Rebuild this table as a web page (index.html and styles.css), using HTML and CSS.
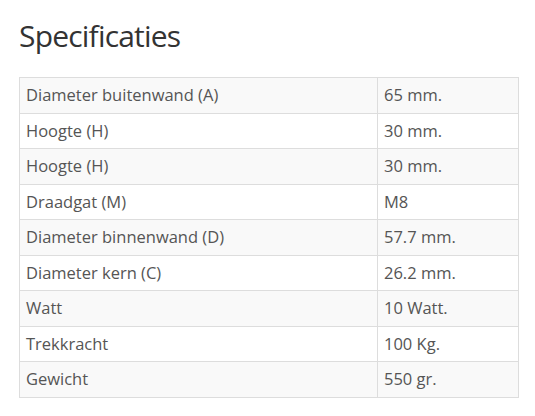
FILE: index.html
```html
<!DOCTYPE html>
<html>
<head>
<meta charset="utf-8">
<link rel="stylesheet" href="styles.css">
</head>
<body>
<div class="page">
  <h2 class="title">Specificaties</h2>
  <table class="specs">
    <tbody>
      <tr><td class="label">Diameter buitenwand (A)</td><td>65 mm.</td></tr>
      <tr><td class="label">Hoogte (H)</td><td>30 mm.</td></tr>
      <tr><td class="label">Hoogte (H)</td><td>30 mm.</td></tr>
      <tr><td class="label">Draadgat (M)</td><td>M8</td></tr>
      <tr><td class="label">Diameter binnenwand (D)</td><td>57.7 mm.</td></tr>
      <tr><td class="label">Diameter kern (C)</td><td>26.2 mm.</td></tr>
      <tr><td class="label">Watt</td><td>10 Watt.</td></tr>
      <tr><td class="label">Trekkracht</td><td>100 Kg.</td></tr>
      <tr><td class="label">Gewicht</td><td>550 gr.</td></tr>
    </tbody>
  </table>
</div>
</body>
</html>
```
FILE: styles.css
```css
html, body {
  margin: 0;
  padding: 0;
  background: #fff;
}
.page {
  padding: 14px 17px 0 19px;
  font-family: "Open Sans", "Liberation Sans", sans-serif;
}
.title {
  margin: 0 0 19px 0;
  font-size: 30px;
  font-weight: 400;
  letter-spacing: -0.8px;
  line-height: 44px;
  color: #333;
}
.specs {
  width: 500px;
  border-collapse: collapse;
  border: 1px solid #ddd;
}
.specs td {
  border: 1px solid #ddd;
  padding: 6px 6px;
  font-size: 16.5px;
  line-height: 22.5px;
  color: #555;
  text-align: left;
}
.specs td.label {
  width: 345px;
}
.specs tr:nth-child(odd) td {
  background: #f9f9f9;
}
```
